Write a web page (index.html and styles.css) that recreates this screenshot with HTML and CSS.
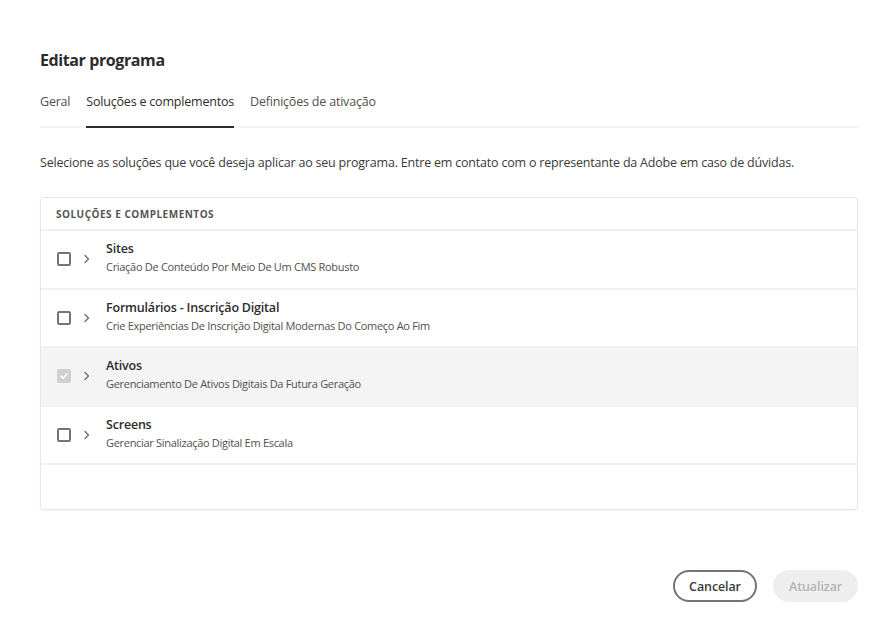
FILE: index.html
```html
<!DOCTYPE html>
<html lang="pt">
<head>
<meta charset="utf-8">
<link rel="stylesheet" href="styles.css">
</head>
<body>
<div class="dialog">
  <h1 class="title">Editar programa</h1>
  <div class="tabs">
    <div class="tab">Geral</div>
    <div class="tab active">Soluções e complementos</div>
    <div class="tab">Definições de ativação</div>
  </div>
  <p class="desc">Selecione as soluções que você deseja aplicar ao seu programa. Entre em contato com o representante da Adobe em caso de dúvidas.</p>
  <div class="card">
    <div class="card-head">SOLUÇÕES E COMPLEMENTOS</div>
    <div class="row">
      <span class="cb"></span>
      <svg class="chev" width="8" height="10" viewBox="0 0 8 10"><path d="M2 1.5 L5.5 5 L2 8.5" fill="none" stroke="#6e6e6e" stroke-width="1.4" stroke-linecap="round" stroke-linejoin="round"/></svg>
      <div class="txt"><div class="name">Sites</div><div class="sub">Criação De Conteúdo Por Meio De Um CMS Robusto</div></div>
    </div>
    <div class="row">
      <span class="cb"></span>
      <svg class="chev" width="8" height="10" viewBox="0 0 8 10"><path d="M2 1.5 L5.5 5 L2 8.5" fill="none" stroke="#6e6e6e" stroke-width="1.4" stroke-linecap="round" stroke-linejoin="round"/></svg>
      <div class="txt"><div class="name">Formulários - Inscrição Digital</div><div class="sub">Crie Experiências De Inscrição Digital Modernas Do Começo Ao Fim</div></div>
    </div>
    <div class="row selected">
      <span class="cb checked"><svg width="10" height="10" viewBox="0 0 10 10"><path d="M2 5.2 L4.2 7.3 L8 2.8" fill="none" stroke="#fff" stroke-width="1.6" stroke-linecap="round" stroke-linejoin="round"/></svg></span>
      <svg class="chev" width="8" height="10" viewBox="0 0 8 10"><path d="M2 1.5 L5.5 5 L2 8.5" fill="none" stroke="#6e6e6e" stroke-width="1.4" stroke-linecap="round" stroke-linejoin="round"/></svg>
      <div class="txt"><div class="name">Ativos</div><div class="sub">Gerenciamento De Ativos Digitais Da Futura Geração</div></div>
    </div>
    <div class="row">
      <span class="cb"></span>
      <svg class="chev" width="8" height="10" viewBox="0 0 8 10"><path d="M2 1.5 L5.5 5 L2 8.5" fill="none" stroke="#6e6e6e" stroke-width="1.4" stroke-linecap="round" stroke-linejoin="round"/></svg>
      <div class="txt"><div class="name">Screens</div><div class="sub">Gerenciar Sinalização Digital Em Escala</div></div>
    </div>
    <div class="filler"></div>
  </div>
  <div class="actions">
    <button class="btn secondary">Cancelar</button>
    <button class="btn disabled">Atualizar</button>
  </div>
</div>
</body>
</html>
```
FILE: styles.css
```css
* { box-sizing: border-box; }
html, body { margin: 0; padding: 0; background: #fff; }
body { font-family: "Open Sans", "Noto Sans", sans-serif; color: #2c2c2c; }
.dialog { padding: 48px 38px 0 40px; width: 896px; height: 638px; }
.title { margin: 0; font-size: 16px; font-weight: 700; line-height: 24px; color: #2c2c2c; letter-spacing: -0.4px; }
.tabs { display: flex; gap: 16px; margin-top: 18px; border-bottom: 2px solid #f3f3f3; height: 38px; }
.tab { font-size: 12.5px; color: #505050; line-height: 20px; padding-top: 2px; letter-spacing: -0.2px; }
.tab.active { color: #2c2c2c; border-bottom: 2px solid #2c2c2c; margin-bottom: -2px; }
.desc { margin: 26px 0 0; font-size: 12.5px; color: #3a3a3a; line-height: 18px; letter-spacing: -0.2px; }
.card { margin-top: 25px; border: 1px solid #e6e6e6; border-radius: 3px; box-shadow: 0 1px 2px rgba(0,0,0,0.06); }
.card-head { height: 33px; padding: 9px 15px 0; font-size: 10px; font-weight: 700; color: #555555; letter-spacing: 0.5px; border-bottom: 2px solid #f1f1f1; }
.row { display: flex; align-items: center; height: 58.6px; border-bottom: 2px solid #f1f1f1; padding-left: 16px; }
.row.selected { background: #f4f4f4; }
.cb { width: 14px; height: 14px; border: 2px solid #747474; border-radius: 2px; display: flex; align-items: center; justify-content: center; margin-top: 0; }
.cb.checked { background: #d0d0d0; border-color: #d0d0d0; }
.chev { margin-left: 12px; margin-top: 0; }
.txt { margin-left: 15px; margin-top: -3px; }
.name { font-size: 12.5px; font-weight: 600; color: #2c2c2c; line-height: 18px; letter-spacing: -0.2px; }
.sub { font-size: 11px; color: #505050; line-height: 17px; letter-spacing: -0.3px; }
.filler { height: 44px; }
.actions { display: flex; justify-content: flex-end; gap: 16px; margin-top: 60px; }
.btn { font-family: inherit; font-size: 12.5px; font-weight: 600; height: 32px; border-radius: 16px; padding: 0 14px; letter-spacing: -0.1px; }
.btn.secondary { background: #fff; border: 2px solid #747474; color: #3a3a3a; width: 84px; }
.btn.disabled { background: #eeeeee; border: 2px solid #eeeeee; color: #b3b3b3; width: 85px; }
```
